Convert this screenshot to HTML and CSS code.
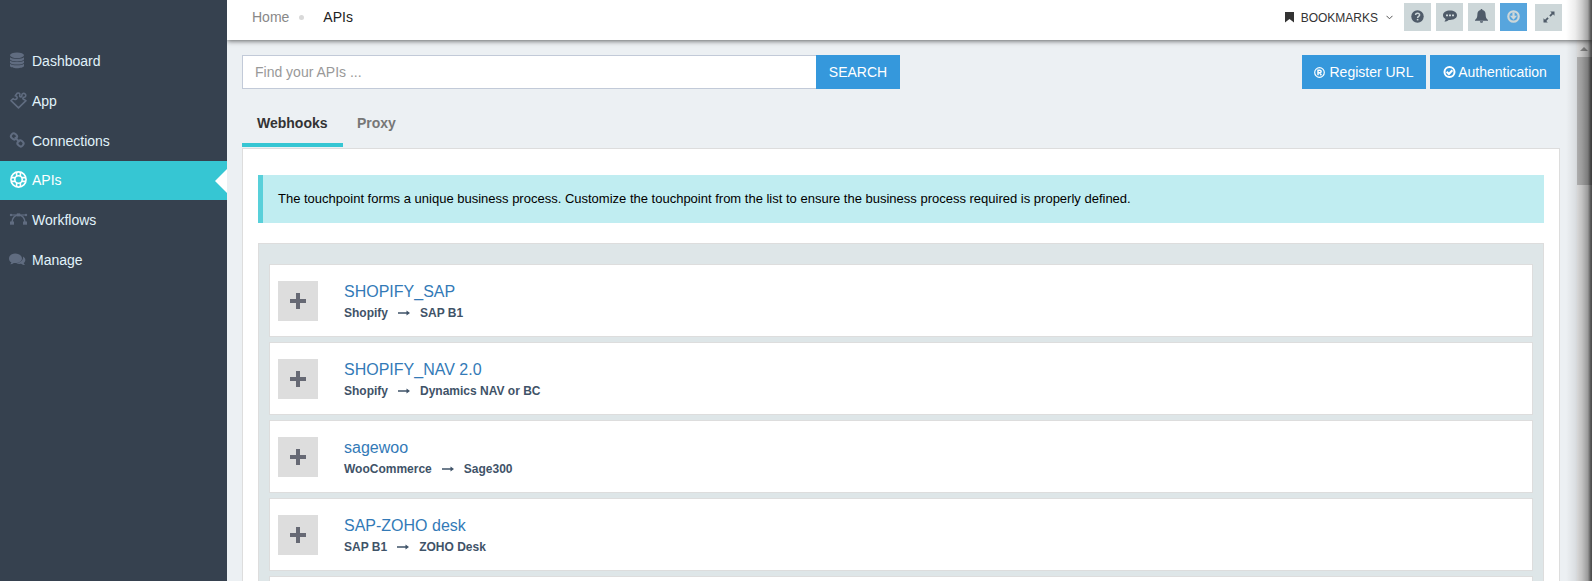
FILE: index.html
```html
<!DOCTYPE html>
<html lang="en">
<head>
<meta charset="utf-8">
<title>APIs</title>
<link rel="stylesheet" href="styles.css">
</head>
<body>
<svg class="defs" width="0" height="0">
  <symbol id="plus" viewBox="0 0 16 16"><path d="M6 0h4v6h6v4h-6v6H6v-6H0V6h6z"/></symbol>
  <symbol id="arrow" viewBox="0 0 12 6"><path d="M0 2.200h8.500V.4L12 3 8.500 5.600V3.800H0z"/></symbol>
</svg>
<div class="app">
  <nav class="sidebar">
    <a class="nav-item"><svg class="nav-icon" viewBox="0 0 17 17"><g fill="currentColor"><ellipse cx="7" cy="3.300" rx="7" ry="2.900"/><path d="M0 5.300c2 2.100 12 2.100 14 0v2.200c-1 2.500-13 2.500-14 0zM0 8.500c2 2.100 12 2.100 14 0v2.200c-1 2.500-13 2.500-14 0zM0 11.700c2 2.100 12 2.100 14 0V14c-1 2.900-13 2.900-14 0z"/></g></svg>Dashboard</a>
    <a class="nav-item"><svg class="nav-icon" viewBox="0 0 17 17"><path d="M8.500 15.800 1 8.600l2.300-1.900c1.400 1.400 3.800.8 3.900-1C7.200 4.500 6.300 4 5.300 3.800L7.200 1.300c1.500-.8 2.900.3 2.700 1.500-.2 1-.5 1.300 0 1.800.9.700 2.200.1 2-1.400-.2-1.700 2-2.400 3.300-1.200 1.200 1.300.5 3.200-1 3.300-1.300.1-1.700 1-1.100 1.700l2.900 1.600z" fill="none" stroke="currentColor" stroke-width="1.600" stroke-linejoin="round"/></svg>App</a>
    <a class="nav-item"><svg class="nav-icon" viewBox="0 0 17 17"><g fill="none" stroke="currentColor" stroke-width="2"><rect x="1" y="1.700" width="6" height="5.400" rx="2.400" transform="rotate(42 4 4.400)"/><rect x="7.500" y="8.700" width="6" height="5.400" rx="2.400" transform="rotate(42 10.500 11.400)"/><path d="m4.800 5.200 4.700 4.900"/></g></svg>Connections</a>
    <a class="nav-item nav-item-active"><svg class="nav-icon" viewBox="0 0 17 17"><g fill="none" stroke="currentColor" stroke-width="1.600"><circle cx="8.500" cy="8.500" r="7.600"/><circle cx="8.500" cy="8.500" r="3.700"/><path d="M6.600 1v4M10.400 1v4M6.600 12v4M10.400 12v4M1 6.600h4M1 10.400h4M12 6.600h4M12 10.400h4"/></g></svg>APIs</a>
    <a class="nav-item nav-item-raised"><svg class="nav-icon" viewBox="0 0 17 17"><g fill="none" stroke="currentColor"><path d="M1 4h15" stroke-width="1.200"/><path d="M2 11.500C2.300 7.500 4.500 4 8.500 4s6.200 3.500 6.500 7.500" stroke-width="1.600"/></g><g fill="currentColor"><rect y="10.500" width="4" height="3.200"/><rect x="13" y="10.500" width="4" height="3.200"/><rect x="6.800" y="2.400" width="3.400" height="3"/><circle cx="1" cy="4" r="1.200"/><circle cx="16" cy="4" r="1.200"/></g></svg>Workflows</a>
    <a class="nav-item nav-item-raised"><svg class="nav-icon" viewBox="0 0 17 17"><g fill="currentColor"><path d="M5.200 2.600C9 2.600 12 4.700 12 7.400s-3 4.700-6.800 4.700l-1.400-.1c-1 .8-2.200 1.200-3.600 1.300.6-.6 1-1.200 1.200-2C-.3 10.400-1 9-1 7.400c0-2.700 2.400-4.800 6.200-4.800z"/><path d="M13 5.500c2.900 1.500 3.200 4.900.6 6.600.2.800.8 1.500 1.400 2-1.500 0-2.800-.5-3.900-1.300-1.700.3-3.600 0-5-.8C10.600 12 13.600 9 13 5.500z"/></g></svg>Manage</a>
  </nav>
  <div class="main">
    <header class="topbar">
      <div class="crumbs"><a class="crumb">Home</a><i class="crumb-dot"></i><span class="crumb-current">APIs</span></div>
      <div class="tools">
        <svg class="bookmark" width="9" height="11" viewBox="0 0 9 11"><path d="M0 0h9v10.500L4.500 7 0 10.500z"/></svg>
        <span class="bookmark-label">BOOKMARKS</span>
        <svg class="chevron" width="7" height="5" viewBox="0 0 7 5"><path d="m.5.8 3 3 3-3" fill="none" stroke="#555"/></svg>
        <div class="tool-group">
          <a class="tool"><svg width="13" height="13" viewBox="0 0 13 13"><circle cx="6.500" cy="6.500" r="6.200" fill="currentColor"/><path d="M4.500 5c.2-2.400 4.200-2.200 4.100 0C8.500 6.400 6.600 6.300 6.600 7.900" fill="none" stroke="#cdd7d9" stroke-width="1.500"/><path d="M5.800 8.900h1.600v1.500H5.800z" fill="#cdd7d9"/></svg></a>
          <a class="tool"><svg width="14" height="12" viewBox="0 0 14 12"><path d="M7 .6c3.900 0 7 2 7 4.700S10.900 10 7 10l-1.300-.1C4.500 11 3 11.500 1.400 11.600c.7-.7 1.100-1.500 1.200-2.500C1 8.200 0 6.900 0 5.300 0 2.600 3.100.6 7 .6z" fill="currentColor"/><path d="M3 4.500h2v1.800H3zM6 4.500h2v1.800H6zM9 4.500h2v1.800H9z" fill="#cdd7d9"/></svg></a>
          <a class="tool"><svg width="13" height="14" viewBox="0 0 13 14"><path d="M5.700 0h1.600v1c2.400.5 3.300 2.300 3.300 4.200 0 3.200.9 4.600 2.400 5.800v.8H0V11c1.500-1.200 2.400-2.600 2.400-5.800 0-1.900.9-3.700 3.300-4.200zM4.900 12.300h3.200c0 2-3.200 2-3.200 0z" fill="currentColor"/></svg></a>
          <a class="tool tool-blue"><svg width="13" height="13" viewBox="0 0 13 13"><circle cx="6.500" cy="6.500" r="5.200" fill="none" stroke="currentColor" stroke-width="2.200"/><path d="M5.400 2.500h2.200v3.300h2.500L6.500 9.800 2.900 5.800h2.500z" fill="currentColor"/></svg></a>
          <a class="tool tool-expand"><svg width="12" height="12" viewBox="0 0 12 12"><path d="M7.200.5h4.300v4.300L10 3.300 7.600 5.700l-1.300-1.300L8.700 2zM4.800 11.500H.5V7.200L2 8.700l2.400-2.400 1.300 1.300L3.300 10z" fill="currentColor"/></svg></a>
        </div>
      </div>
    </header>
    <div class="viewport">
      <div class="content">
        <div class="actions">
          <div class="search"><input class="search-input" type="text" placeholder="Find your APIs ..."><button class="button search-button">SEARCH</button></div>
          <div class="buttons">
            <button class="button register"><svg width="11" height="11" viewBox="0 0 11 11"><circle cx="5.500" cy="5.500" r="4.800" fill="none" stroke="#fff" stroke-width="1.200"/><path d="M4 8.300V3.200h1.700c1.900 0 1.900 2.500 0 2.500H4M5.800 5.700l1.500 2.600" fill="none" stroke="#fff" stroke-width="1.500"/></svg>Register URL</button>
            <button class="button auth"><svg width="13" height="12" viewBox="0 0 13 12"><circle cx="6.500" cy="6" r="5" fill="none" stroke="#fff" stroke-width="2"/><path d="m3.700 5.800 2.200 2.100 3.500-3.600" fill="none" stroke="#fff" stroke-width="2.100"/></svg>Authentication</button>
          </div>
        </div>
        <div class="tabs"><a class="tab tab-active">Webhooks</a><a class="tab">Proxy</a></div>
        <section class="panel">
          <p class="note">The touchpoint forms a unique business process. Customize the touchpoint from the list to ensure the business process required is properly defined.</p>
          <div class="list">
            <article class="row"><span class="add"><svg width="16" height="16"><use href="#plus"/></svg></span><div class="info"><a class="name">SHOPIFY_SAP</a><div class="route"><span>Shopify</span><svg width="12" height="6"><use href="#arrow"/></svg><span>SAP B1</span></div></div></article>
            <article class="row"><span class="add"><svg width="16" height="16"><use href="#plus"/></svg></span><div class="info"><a class="name">SHOPIFY_NAV 2.0</a><div class="route"><span>Shopify</span><svg width="12" height="6"><use href="#arrow"/></svg><span>Dynamics NAV or BC</span></div></div></article>
            <article class="row"><span class="add"><svg width="16" height="16"><use href="#plus"/></svg></span><div class="info"><a class="name">sagewoo</a><div class="route"><span>WooCommerce</span><svg width="12" height="6"><use href="#arrow"/></svg><span>Sage300</span></div></div></article>
            <article class="row"><span class="add"><svg width="16" height="16"><use href="#plus"/></svg></span><div class="info"><a class="name">SAP-ZOHO desk</a><div class="route"><span>SAP B1</span><svg width="12" height="6"><use href="#arrow"/></svg><span>ZOHO Desk</span></div></div></article>
            <article class="row"></article>
          </div>
        </section>
      </div>
      <div class="scrollbar"><svg class="scroll-up" width="8" height="4" viewBox="0 0 8 4"><path d="M0 4 4 0l4 4z" fill="#999"/></svg><i class="thumb"></i></div>
    </div>
  </div>
</div>
<div class="edge-shade"></div>
</body>
</html>
```
FILE: styles.css
```css
* { box-sizing: border-box; }
body { margin: 0; height: 581px; overflow: hidden; font-family: "Liberation Sans", Arial, sans-serif; font-size: 14px; color: #333; background: #ecf0f3; }
svg { display: block; flex: none; }
.defs { position: absolute; }
.app { display: flex; height: 581px; }
.sidebar { width: 227px; flex: none; background: #36414f; padding-top: 41px; display: flex; flex-direction: column; gap: 1px; }
.nav-item { display: flex; align-items: center; height: 39px; padding-left: 10px; gap: 5px; color: #e1f3fb; font-size: 14px; }
.nav-icon { width: 17px; height: 17px; color: #606c80; overflow: visible; }
.nav-item-active { background: #36c6d3; color: #fff; position: relative; padding-bottom: 2px; }
.nav-item-raised { padding-bottom: 2px; }
.nav-item-active .nav-icon { color: #fff; }
.nav-item-active::after { content: ""; position: absolute; right: 0; top: 8px; border: 12px solid transparent; border-left: 0; border-right-color: #fff; }
.main { flex: 1; min-width: 0; display: flex; flex-direction: column; }
.topbar { height: 40px; flex: none; background: #fff; display: flex; justify-content: space-between; padding: 0 30px 0 25px; box-shadow: 0 1px 5px rgba(0, 0, 0, .6); z-index: 1; clip-path: inset(0 0 -8px 0); }
.crumbs { display: flex; align-items: center; height: 34px; }
.crumb { color: #888; }
.crumb-dot { width: 5px; height: 5px; border-radius: 50%; background: #d9d9d9; margin: 0 19px 0 10px; }
.crumb-current { color: #222; }
.tools { display: flex; align-items: center; height: 35px; }
.bookmark { fill: #333; }
.bookmark-label { font-size: 12px; margin: 0 8px 0 7px; }
.tool-group { display: flex; gap: 5px; margin-left: 11px; height: 28px; align-self: flex-start; margin-top: 3px; }
.tool { width: 27px; height: 28px; background: #cdd7d9; color: #4f5b69; display: flex; align-items: center; justify-content: center; padding-bottom: 2px; }
.tool-blue { background: #57a5dd; color: #cdd7d9; }
.tool-expand { height: 27px; margin: 1px 0 0 3px; }
.viewport { flex: 1; min-height: 0; display: flex; overflow: hidden; }
.content { flex: 1; padding: 15px 17px 0 15px; }
.actions { display: flex; justify-content: space-between; height: 34px; }
.search { display: flex; }
.search-input { width: 574px; height: 34px; border: 1px solid #c2cad8; border-right: 0; background: #fff; padding: 0 12px; font: 14px "Liberation Sans", Arial, sans-serif; border-radius: 0; }
.search-input::placeholder { color: #999; opacity: 1; }
.button { border: 0; background: #3598dc; color: #fff; height: 34px; padding: 0; font: 14px "Liberation Sans", Arial, sans-serif; display: flex; align-items: center; justify-content: center; white-space: nowrap; }
.search-button { width: 84px; }
.buttons { display: flex; gap: 4px; }
.register { width: 124px; gap: 4px; }
.auth { width: 130px; gap: 2px; }
.tabs { display: flex; height: 59px; padding-bottom: 1px; }
.tab { padding: 26px 15px 0 14px; color: #777; font-weight: bold; line-height: 16px; }
.tab-active { width: 101px; padding-left: 15px; color: #333; border-bottom: 4px solid #36c6d3; }
.panel { height: 500px; border: 1px solid #ddd; background: #fff; padding: 26px 15px 0; }
.note { margin: 0 0 20px; height: 48px; line-height: 47px; padding-left: 15px; border-left: 5px solid #58d0da; background: #c0edf1; color: #000; font-size: 13px; }
.list { height: 400px; border: 1px solid #ddd; background: #dee6e8; padding: 20px 10px 0; display: flex; flex-direction: column; gap: 5px; }
.row { height: 73px; flex: none; background: #fff; border: 1px solid #ddd; padding: 16px 8px; display: flex; gap: 26px; }
.add { width: 40px; height: 40px; background: #ddd; display: flex; align-items: center; justify-content: center; fill: #666974; }
.name { display: block; color: #337ab7; font-size: 16px; line-height: 20px; padding-top: 1px; }
.route { display: flex; align-items: center; gap: 10px; font-size: 12px; font-weight: bold; line-height: 16px; margin-top: 3px; color: #3f5368; }
.route svg { fill: #3f5368; }
.scrollbar { width: 15px; background: #f1f1f1; padding-top: 7px; }
.scroll-up { margin: 0 0 0 3px; }
.thumb { display: block; height: 128px; margin-top: 6px; background: #c1c1c1; }
.edge-shade { position: absolute; z-index: 2; right: 0; top: 0; width: 26px; height: 581px; background: linear-gradient(90deg, rgba(0,0,0,0), rgba(0,0,0,.07) 35%, rgba(0,0,0,.2) 62%, rgba(0,0,0,.36) 84%, rgba(0,0,0,.62) 94%, rgba(0,0,0,.7)); pointer-events: none; }
```
